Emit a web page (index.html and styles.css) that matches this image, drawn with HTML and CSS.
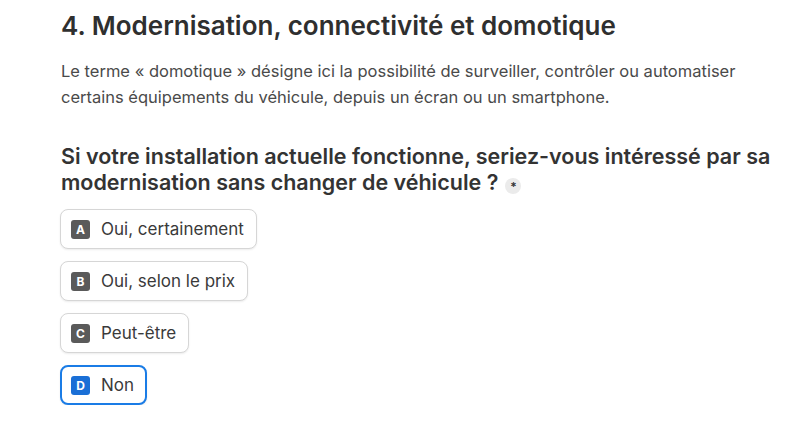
FILE: index.html
```html
<!DOCTYPE html>
<html lang="fr">
  <head>
    <meta charset="UTF-8" />
    <meta name="viewport" content="width=device-width, initial-scale=1.0" />
    <title>Questionnaire - Modernisation</title>
    <link rel="stylesheet" href="styles.css">
  </head>
  <body>
    <div class="section">
      <h2 class="section-title">4. Modernisation, connectivité et domotique</h2>
      <p class="section-intro">
        Le terme « domotique » désigne ici la possibilité de surveiller, contrôler ou automatiser
        certains équipements du véhicule, depuis un écran ou un smartphone.
      </p>

      <div class="question">
        <h3 class="question-title">
          Si votre installation actuelle fonctionne, seriez-vous intéressé par sa
          modernisation sans changer de véhicule ?<span class="required">*</span>
        </h3>

        <div class="choices">
          <button class="choice"><span class="key">A</span>Oui, certainement</button>
          <button class="choice"><span class="key">B</span>Oui, selon le prix</button>
          <button class="choice"><span class="key">C</span>Peut-être</button>
          <button class="choice selected"><span class="key">D</span>Non</button>
        </div>
      </div>
    </div>
  </body>
</html>
```

FILE: styles.css
```css
body {
  margin: 0;
  font-family: Inter, "Noto Sans", Arial, sans-serif;
  background: #fff;
  color: #333;
}
.section {
  padding: 9px 16px 0 61px;
}
.section-title {
  margin: 0;
  font-size: 26px;
  line-height: 34px;
  font-weight: 600;
  color: #2f2f2f;
}
.section-intro {
  margin: 15px 0 0;
  font-size: 16.5px;
  line-height: 26px;
  color: #4a4a4a;
}
.question {
  margin-top: 33px;
}
.question-title {
  margin: 0;
  font-size: 21.5px;
  line-height: 26px;
  font-weight: 600;
  color: #333;
}
.required {
  display: inline-block;
  width: 16px;
  height: 16px;
  margin-left: 7px;
  border-radius: 50%;
  background: #ebebeb;
  font-size: 12px;
  line-height: 18px;
  text-align: center;
  vertical-align: -1px;
  color: #333;
}
.choices {
  display: flex;
  flex-direction: column;
  align-items: flex-start;
  gap: 12px;
  margin-top: 14px;
  margin-left: -1px;
}
.choice {
  display: flex;
  align-items: center;
  height: 40px;
  box-sizing: border-box;
  padding: 0 12px 0 10px;
  background: #fff;
  border: 1px solid #d6d6d6;
  border-radius: 8px;
  box-shadow: 0 1px 2px rgba(0, 0, 0, 0.08);
  font-family: inherit;
  font-size: 17px;
  color: #3a3a3a;
  cursor: pointer;
}
.key {
  display: inline-block;
  width: 19px;
  height: 19px;
  margin-right: 11px;
  border-radius: 3px;
  background: #5a5a5a;
  color: #fff;
  font-size: 12px;
  font-weight: 700;
  line-height: 19px;
  text-align: center;
}
.choice.selected {
  border: 2px solid #1a7ce6;
  padding: 0 11px 0 9px;
}
.choice.selected .key {
  background: #1a6fd6;
}
```
